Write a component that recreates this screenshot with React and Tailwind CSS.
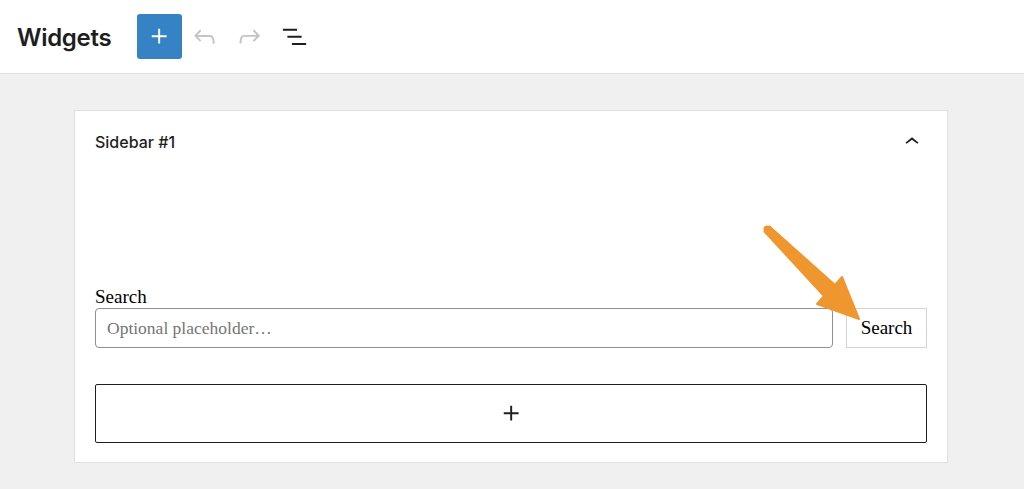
import React from "react";

const Icon = ({ d, className }) => (
  <svg viewBox="0 0 24 24" className={className} fill="currentColor">
    <path d={d} />
  </svg>
);

const PLUS = "M11 12.5V17.5H12.5V12.5H17.5V11H12.5V6H11V11H6V12.5H11Z";
const UNDO =
  "M18.3 11.7c-.6-.6-1.4-.9-2.3-.9H6.7l2.9-3.3-1.1-1-4.5 5L8.5 16l1-1-2.7-2.7H16c.5 0 .9.2 1.3.5 1 1 1 3.4 1 4.5v.3h1.5v-.2c0-1.5 0-4.3-1.5-5.7z";
const REDO =
  "M15.6 6.5l-1.1 1 2.9 3.3H8c-.9 0-1.7.3-2.3.9-1.4 1.5-1.4 4.2-1.4 5.6v.2h1.5v-.3c0-1.1 0-3.5 1-4.5.3-.3.7-.5 1.3-.5h9.2L14.5 15l1.1 1.1 4.6-4.6-4.6-5z";
const LIST = "M3 6h11v1.5H3V6Zm3.5 5.5h11V13h-11v-1.5ZM21 17H10v1.5h11V17Z";
const CHEVRON_UP = "M6.5 12.4L12 8l5.5 4.4-.9 1.2L12 10l-4.6 3.6-1-1.2z";

const App = () => {
  return (
    <div className="w-[1024px] h-[489px] overflow-hidden bg-[#f0f0f0] font-['Inter',sans-serif] text-[#1e1e1e]">
      {/* top bar */}
      <div className="h-[74px] bg-white border-b border-[#e0e0e0] flex items-center pl-[17px]">
        <h1 className="text-[24px] font-semibold tracking-[-0.3px] mr-[26px] mt-[2px]">Widgets</h1>
        <button className="w-[45px] h-[45px] rounded-[3px] bg-[#3582c4] text-white flex items-center justify-center">
          <Icon d={PLUS} className="w-[31px] h-[31px]" />
        </button>
        <div className="flex items-center ml-[7px] gap-[14px]">
          <Icon d={UNDO} className="w-[31px] h-[31px] text-[#c3c4c7]" />
          <Icon d={REDO} className="w-[31px] h-[31px] text-[#c3c4c7]" />
          <Icon d={LIST} className="w-[31px] h-[31px] text-[#1e1e1e]" />
        </div>
      </div>

      {/* widget area */}
      <div className="pt-[36px] pl-[74px]">
        <div className="relative w-[874px] h-[353px] bg-white border border-[#e0e0e0] px-[20px]">
          <div className="h-[62px] flex items-center justify-between">
            <span className="text-[16px] font-medium">Sidebar #1</span>
            <Icon d={CHEVRON_UP} className="w-[28px] h-[28px] mr-[1px]" />
          </div>

          <div className="mt-[113px] font-['Liberation_Serif',serif] text-black">
            <label className="block text-[19px] leading-[22px]">Search</label>
            <div className="flex items-center gap-[13px]">
              <div className="w-[738px] h-[40px] border border-[#8c8f94] rounded-[4px] flex items-center px-[11px]">
                <span className="text-[17.5px] text-[#757575]">Optional placeholder…</span>
              </div>
              <button className="w-[81px] h-[40px] border border-[#d4d4d4] bg-white text-[19px] flex items-center justify-center">
                Search
              </button>
            </div>
          </div>

          <button className="mt-[36px] w-[832px] h-[59px] border border-[#1e1e1e] rounded-[2px] flex items-center justify-center">
            <Icon d={PLUS} className="w-[31px] h-[31px]" />
          </button>

          {/* annotation arrow */}
          <svg
            className="absolute left-[676px] top-[105px]"
            width="120"
            height="110"
            viewBox="750 215 120 110"
          >
            <circle cx="766" cy="228" r="3.5" fill="#f0962f" />
            <polygon
              points="768.5,225.5 834,284 841,276 858,318 816,303 823,295 763.5,230.5"
              fill="#f0962f"
              stroke="#f0962f"
              strokeWidth="2"
              strokeLinejoin="round"
            />
          </svg>
        </div>
      </div>
    </div>
  );
};

export default App;
